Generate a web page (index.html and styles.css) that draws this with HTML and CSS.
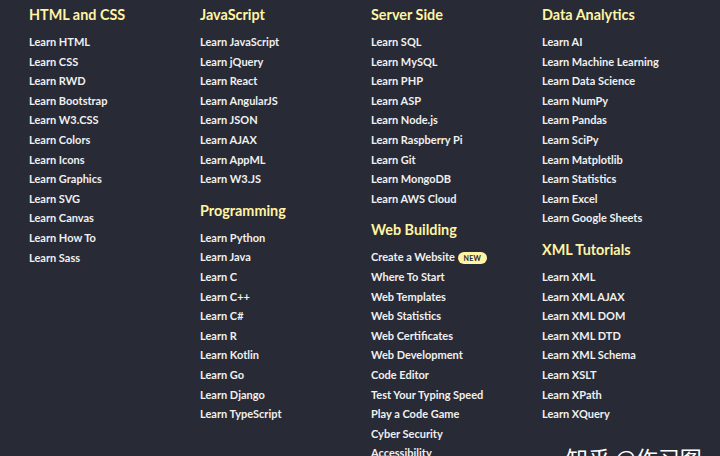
FILE: index.html
```html
<!DOCTYPE html>
<html lang="en">
<head>
<meta charset="utf-8">
<title>Tutorials</title>
<link rel="stylesheet" href="styles.css">
</head>
<body>
<div class="footer-nav">
  <div class="col">
    <section class="group">
      <h3>HTML and CSS</h3>
      <ul>
        <li>Learn HTML</li><li>Learn CSS</li><li>Learn RWD</li><li>Learn Bootstrap</li><li>Learn W3.CSS</li><li>Learn Colors</li><li>Learn Icons</li><li>Learn Graphics</li><li>Learn SVG</li><li>Learn Canvas</li><li>Learn How To</li><li>Learn Sass</li>
      </ul>
    </section>
  </div>
  <div class="col">
    <section class="group">
      <h3>JavaScript</h3>
      <ul>
        <li>Learn JavaScript</li><li>Learn jQuery</li><li>Learn React</li><li>Learn AngularJS</li><li>Learn JSON</li><li>Learn AJAX</li><li>Learn AppML</li><li>Learn W3.JS</li>
      </ul>
    </section>
    <section class="group">
      <h3>Programming</h3>
      <ul>
        <li>Learn Python</li><li>Learn Java</li><li>Learn C</li><li>Learn C++</li><li>Learn C#</li><li>Learn R</li><li>Learn Kotlin</li><li>Learn Go</li><li>Learn Django</li><li>Learn TypeScript</li>
      </ul>
    </section>
  </div>
  <div class="col">
    <section class="group">
      <h3>Server Side</h3>
      <ul>
        <li>Learn SQL</li><li>Learn MySQL</li><li>Learn PHP</li><li>Learn ASP</li><li>Learn Node.js</li><li>Learn Raspberry Pi</li><li>Learn Git</li><li>Learn MongoDB</li><li>Learn AWS Cloud</li>
      </ul>
    </section>
    <section class="group">
      <h3>Web Building</h3>
      <ul>
        <li>Create a Website <span class="badge">NEW</span></li><li>Where To Start</li><li>Web Templates</li><li>Web Statistics</li><li>Web Certificates</li><li>Web Development</li><li>Code Editor</li><li>Test Your Typing Speed</li><li>Play a Code Game</li><li>Cyber Security</li><li>Accessibility</li>
      </ul>
    </section>
  </div>
  <div class="col">
    <section class="group">
      <h3>Data Analytics</h3>
      <ul>
        <li>Learn AI</li><li>Learn Machine Learning</li><li>Learn Data Science</li><li>Learn NumPy</li><li>Learn Pandas</li><li>Learn SciPy</li><li>Learn Matplotlib</li><li>Learn Statistics</li><li>Learn Excel</li><li>Learn Google Sheets</li>
      </ul>
    </section>
    <section class="group">
      <h3>XML Tutorials</h3>
      <ul>
        <li>Learn XML</li><li>Learn XML AJAX</li><li>Learn XML DOM</li><li>Learn XML DTD</li><li>Learn XML Schema</li><li>Learn XSLT</li><li>Learn XPath</li><li>Learn XQuery</li>
      </ul>
    </section>
  </div>
</div>
<div class="watermark">知乎 @作习图</div>
</body>
</html>
```
FILE: styles.css
```css
html, body {
  margin: 0;
  padding: 0;
  height: 100%;
  overflow: hidden;
}
body {
  background: #282a35;
  font-family: "Lato", "Noto Sans", sans-serif;
  color: #f0f0f0;
  position: relative;
}
.footer-nav {
  display: grid;
  grid-template-columns: repeat(4, 171px);
  padding: 4px 0 0 29px;
}
.group + .group {
  margin-top: 11px;
}
.group h3 {
  margin: 0 0 7px;
  font-size: 14.4px;
  line-height: 21px;
  font-weight: 700;
  color: #fff4a3;
}
.group ul {
  list-style: none;
  margin: 0;
  padding: 0;
}
.group li {
  font-size: 11px;
  line-height: 19.6px;
  font-weight: 700;
  white-space: nowrap;
}
.badge {
  display: inline-block;
  vertical-align: middle;
  margin-left: 0;
  padding: 0 6px;
  height: 12px;
  line-height: 12px;
  border-radius: 6px;
  background: #fff4a3;
  color: #282a35;
  font-size: 7px;
  font-weight: 700;
  letter-spacing: 0.2px;
  position: relative;
  top: -1px;
}
.watermark {
  position: absolute;
  left: 566px;
  top: 444px;
  font-family: "Noto Sans CJK SC", sans-serif;
  font-size: 22px;
  line-height: 26px;
  color: #ffffff;
  white-space: nowrap;
}
```
